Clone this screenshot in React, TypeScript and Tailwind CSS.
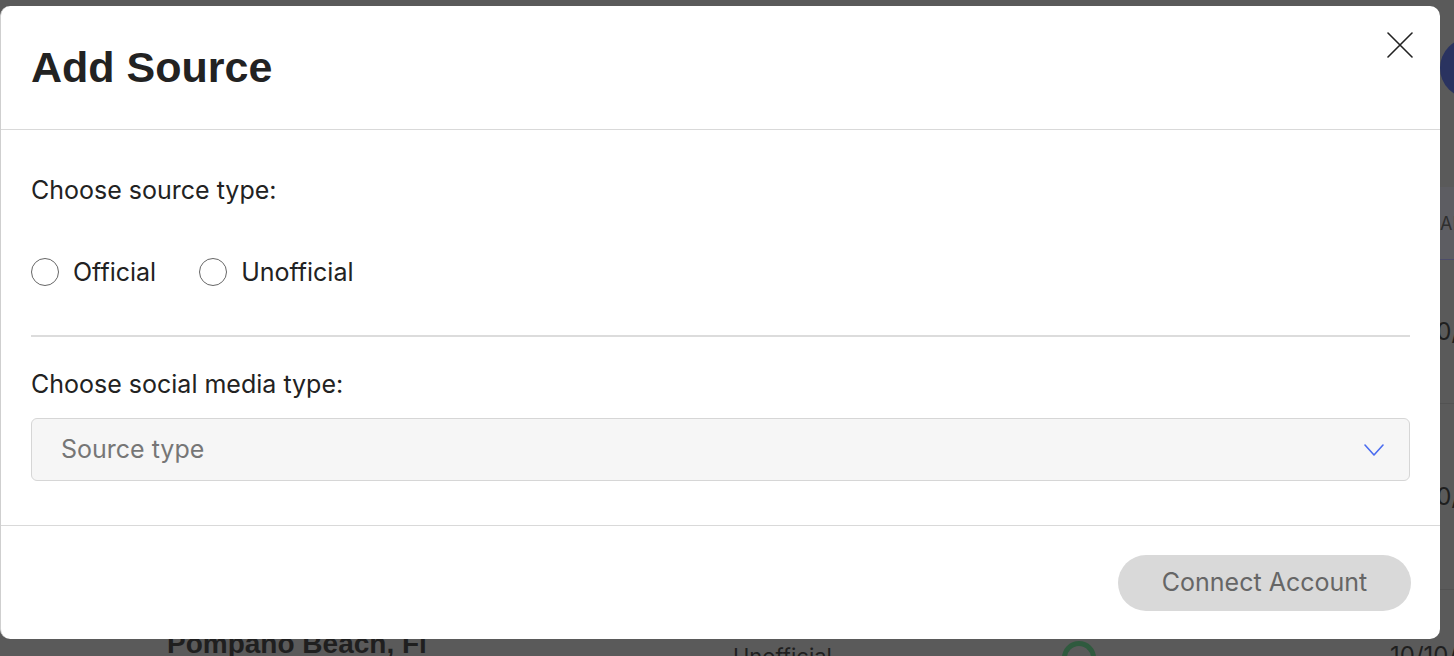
import { useState } from 'react'

const cols = 'grid grid-cols-[167px_566px_329px_328px_1fr]'

function BackgroundPage() {
  return (
    <div className="w-full h-[656px] bg-[#5a5a5a] overflow-hidden" style={{ fontFamily: 'Inter, sans-serif' }}>
      <div className="h-[187px] flex items-start justify-end">
        <div className="mt-[38px] -mr-[46px] w-[60px] h-[60px] rounded-full bg-[#2a3360] shrink-0" />
      </div>
      <div className={`h-[73px] bg-[#5d5d62] border-b border-[#4c4c6a] ${cols} items-center text-[18px] text-[#2e2e2e]`}>
        <div />
        <div>LOCATION</div>
        <div>TYPE</div>
        <div>STATUS</div>
        <div className="whitespace-nowrap pl-[50px]">ADDED</div>
      </div>
      <div className={`h-[144px] border-b border-[#525252] ${cols} items-center text-[#1f1f1f]`}>
        <div /><div /><div /><div />
        <div className="pl-[3px] text-[24px] whitespace-nowrap">10/10/2023</div>
      </div>
      <div className={`h-[186px] border-b border-[#525252] ${cols} items-center text-[#1f1f1f]`}>
        <div /><div /><div /><div />
        <div className="pl-[3px] text-[24px] whitespace-nowrap">10/10/2023</div>
      </div>
      <div className={`h-[110px] ${cols} items-start text-[#1f1f1f]`}>
        <div />
        <div className="pt-[33px] text-[28px] font-bold whitespace-nowrap" style={{ fontFamily: '"Liberation Sans", Arial, sans-serif' }}>
          Pompano Beach, Fl
        </div>
        <div className="pt-[50px] text-[22px]">Unofficial</div>
        <div className="pt-[51px]">
          <div className="w-[34px] h-[34px] rounded-full border-[5px] border-[#2f5a3e] border-b-transparent" />
        </div>
        <div className="pt-[48px] text-[24px] whitespace-nowrap">10/10/2023</div>
      </div>
    </div>
  )
}

function Radio({ label, checked, onClick }: { label: string; checked: boolean; onClick: () => void }) {
  return (
    <button onClick={onClick} className="flex items-center gap-[14px]">
      <span className="w-[28px] h-[28px] rounded-full border border-[#666] flex items-center justify-center">
        {checked && <span className="w-[14px] h-[14px] rounded-full bg-[#3b5bf0]" />}
      </span>
      <span className="text-[25px] text-[#222] leading-[30px]">{label}</span>
    </button>
  )
}

export default function App() {
  const [tipo, setTipo] = useState('')

  return (
    <div className="relative w-[1454px] h-[656px] overflow-hidden">
      <BackgroundPage />
      <div
        className="absolute left-0 top-[6px] w-[1440px] h-[633px] bg-white rounded-[10px] border-l border-[#cfcfcf] flex flex-col"
        style={{ fontFamily: 'Inter, "Noto Sans", sans-serif' }}
      >
        <div className="relative h-[124px] shrink-0 border-b border-[#d9d9d9] flex items-center px-[30px]">
          <h2 className="text-[43px] font-bold text-[#222]" style={{ fontFamily: '"Liberation Sans", Arial, sans-serif' }}>
            Add Source
          </h2>
          <button className="absolute right-[27px] top-[26px] w-[26px] h-[26px] flex items-center justify-center">
            <svg width="26" height="26" viewBox="0 0 26 26" fill="none" stroke="#222" strokeWidth="1.6" strokeLinecap="round">
              <path d="M1 1L25 25M25 1L1 25" />
            </svg>
          </button>
        </div>

        <div className="flex-1 px-[30px] pt-[45px]">
          <p className="text-[25px] leading-[30px] text-[#222]">Choose source type:</p>
          <div className="mt-[53px] flex items-center gap-[43px] h-[28px]">
            <Radio label="Official" checked={tipo === 'official'} onClick={() => setTipo('official')} />
            <Radio label="Unofficial" checked={tipo === 'unofficial'} onClick={() => setTipo('unofficial')} />
          </div>
          <div className="mt-[49px] h-[2px] bg-[#dcdcdc]" />
          <p className="mt-[32px] text-[25px] leading-[30px] text-[#222]">Choose social media type:</p>
          <button className="mt-[19px] w-full h-[63px] bg-[#f6f6f6] border border-[#d6d6d6] rounded-[6px] flex items-center justify-between pl-[29px] pr-[25px]">
            <span className="text-[25px] text-[#767676]">Source type</span>
            <svg width="20" height="12" viewBox="0 0 20 12" fill="none" stroke="#4a6cf0" strokeWidth="1.6" strokeLinecap="round" strokeLinejoin="round">
              <path d="M1 1L10 11L19 1" />
            </svg>
          </button>
        </div>

        <div className="h-[114px] shrink-0 border-t border-[#d9d9d9] flex items-center justify-end pr-[29px]">
          <button disabled className="h-[56px] w-[293px] rounded-full bg-[#d9d9d9] text-[25px] text-[#666]">
            Connect Account
          </button>
        </div>
      </div>
    </div>
  )
}
